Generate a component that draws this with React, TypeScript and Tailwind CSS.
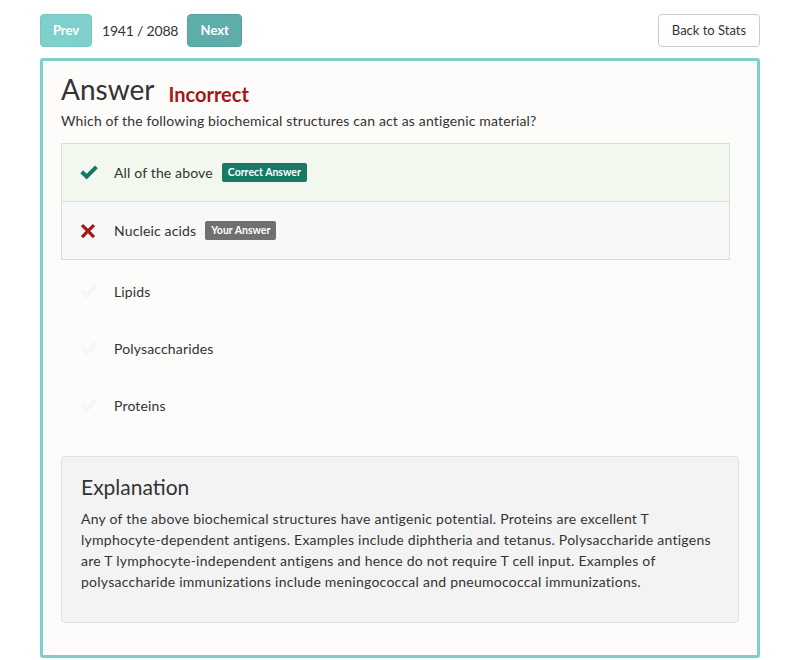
import type { ReactNode } from "react";

const FONT = { fontFamily: "Lato, 'Open Sans', sans-serif" };

function Check({ className }: { className: string }) {
  return (
    <svg viewBox="0 0 24 24" className={className} fill="currentColor">
      <path d="M2.5 12.2 L5.6 9.1 L9.4 12.9 L18.6 3.7 L21.7 6.8 L9.4 19.1 Z" />
    </svg>
  );
}

function Cross({ className }: { className: string }) {
  return (
    <svg viewBox="0 0 24 24" className={className} fill="currentColor">
      <path d="M5.5 2.5 L12 9 L18.5 2.5 L21.5 5.5 L15 12 L21.5 18.5 L18.5 21.5 L12 15 L5.5 21.5 L2.5 18.5 L9 12 L2.5 5.5 Z" />
    </svg>
  );
}

function Row({
  icon,
  label,
  badge,
  className,
}: {
  icon: ReactNode;
  label: string;
  badge?: ReactNode;
  className: string;
}) {
  return (
    <div className={`flex items-center pl-4 ${className}`}>
      <div className="flex w-[36px] items-center">{icon}</div>
      <span className="text-[14px] tracking-[0.15px] text-[#333]">{label}</span>
      {badge}
    </div>
  );
}

const OTHERS = ["Lipids", "Polysaccharides", "Proteins"];

export default function App() {
  return (
    <div className="min-h-[660px] bg-white px-[40px] pt-[14px]" style={FONT}>
      <div className="flex items-center">
        <button className="h-[33px] w-[52px] rounded border border-[#74c7c3] bg-[#7fd0cc] text-[13px] font-bold text-white">
          Prev
        </button>
        <span className="ml-[10px] mr-[9px] text-[14px] tracking-[-0.2px] text-[#333]">1941 / 2088</span>
        <button className="h-[33px] w-[55px] rounded border border-[#55a4a2] bg-[#5eadab] text-[13px] font-bold text-white">
          Next
        </button>
        <button className="ml-auto h-[33px] w-[102px] rounded border border-[#ccc] bg-white text-[13px] text-[#333]">
          Back to Stats
        </button>
      </div>

      <div className="mt-[11px] h-[600px] rounded-[3px] border-[3px] border-[#7dcfcb] bg-[#fdfcfb] pl-[18px] pr-[18px] pt-[10px]">
        <div className="flex items-end">
          <h1 className="text-[28px] leading-[36px] text-[#333]">Answer</h1>
          <span className="mb-[-1px] ml-[14px] text-[20px] font-bold leading-[28px] text-[#a31818]">
            Incorrect
          </span>
        </div>
        <p className="mt-[4px] text-[14px] leading-[20px] tracking-[0.15px] text-[#333]">
          Which of the following biochemical structures can act as antigenic material?
        </p>

        <div className="mt-[12px] mr-[9px]">
          <Row
            className="h-[59px] border border-[#d6e3d2] bg-[#f2f8ee]"
            icon={<Check className="h-[22px] w-[22px] text-[#17786a]" />}
            label="All of the above"
            badge={
              <span className="ml-[9px] rounded-[2px] bg-[#177a66] px-[6px] py-[3px] text-[10.5px] font-bold leading-[13px] text-white">
                Correct Answer
              </span>
            }
          />
          <Row
            className="h-[58px] border border-t-0 border-[#dcdcdc] bg-[#f8f8f8]"
            icon={<Cross className="ml-[1px] h-[18px] w-[18px] text-[#a31818]" />}
            label="Nucleic acids"
            badge={
              <span className="ml-[9px] rounded-[2px] bg-[#707070] px-[6px] py-[3px] text-[10.5px] font-bold leading-[13px] text-white">
                Your Answer
              </span>
            }
          />
          <div className="pt-[3px]">
            {OTHERS.map((o) => (
              <Row
                key={o}
                className="h-[57px] border border-transparent"
                icon={<Check className="h-[22px] w-[22px] text-[#f6f6f4]" />}
                label={o}
              />
            ))}
          </div>
        </div>

        <div className="mt-[22px] rounded border border-[#e2e2e2] bg-[#f3f3f3] px-[19px] pb-[30px] pt-[17px]">
          <h2 className="text-[21px] leading-[26px] text-[#333]">Explanation</h2>
          <p className="mt-[8px] text-[14px] leading-[21px] tracking-[0.25px] text-[#333]">
            Any of the above biochemical structures have antigenic potential. Proteins are excellent T
            lymphocyte-dependent antigens. Examples include diphtheria and tetanus. Polysaccharide antigens
            are T lymphocyte-independent antigens and hence do not require T cell input. Examples of
            polysaccharide immunizations include meningococcal and pneumococcal immunizations.
          </p>
        </div>
      </div>
    </div>
  );
}
